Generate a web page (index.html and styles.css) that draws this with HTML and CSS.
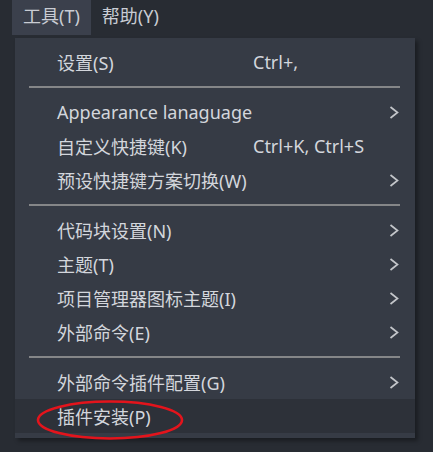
FILE: index.html
```html
<!DOCTYPE html>
<html lang="zh">
<head>
<meta charset="utf-8">
<link rel="stylesheet" href="styles.css">
</head>
<body>
<div class="menubar">
  <div class="top-item active">工具(T)</div>
  <div class="top-item">帮助(Y)</div>
</div>
<div class="panel">
  <div class="item"><span class="label">设置(S)</span><span class="shortcut">Ctrl+,</span></div>
  <div class="sep"></div>
  <div class="item"><span class="label">Appearance lanaguage</span><svg class="arrow" viewBox="0 0 10 14"><polyline points="1.5,1.5 8.5,7 1.5,12.5"/></svg></div>
  <div class="item"><span class="label">自定义快捷键(K)</span><span class="shortcut">Ctrl+K, Ctrl+S</span></div>
  <div class="item"><span class="label">预设快捷键方案切换(W)</span><svg class="arrow" viewBox="0 0 10 14"><polyline points="1.5,1.5 8.5,7 1.5,12.5"/></svg></div>
  <div class="sep"></div>
  <div class="item"><span class="label">代码块设置(N)</span><svg class="arrow" viewBox="0 0 10 14"><polyline points="1.5,1.5 8.5,7 1.5,12.5"/></svg></div>
  <div class="item"><span class="label">主题(T)</span><svg class="arrow" viewBox="0 0 10 14"><polyline points="1.5,1.5 8.5,7 1.5,12.5"/></svg></div>
  <div class="item"><span class="label">项目管理器图标主题(I)</span><svg class="arrow" viewBox="0 0 10 14"><polyline points="1.5,1.5 8.5,7 1.5,12.5"/></svg></div>
  <div class="item"><span class="label">外部命令(E)</span><svg class="arrow" viewBox="0 0 10 14"><polyline points="1.5,1.5 8.5,7 1.5,12.5"/></svg></div>
  <div class="sep"></div>
  <div class="item"><span class="label">外部命令插件配置(G)</span><svg class="arrow" viewBox="0 0 10 14"><polyline points="1.5,1.5 8.5,7 1.5,12.5"/></svg></div>
  <div class="item hover"><span class="label">插件安装(P)</span></div>
</div>
<svg class="circle" viewBox="0 0 150 44"><ellipse cx="74" cy="21" rx="72" ry="18.5"/></svg>
</body>
</html>
```

FILE: styles.css
```css
html, body {
  margin: 0;
  padding: 0;
}
body {
  width: 433px;
  height: 452px;
  overflow: hidden;
  background: #282c33;
  font-family: "Noto Sans", "Noto Sans CJK SC", sans-serif;
  color: #d3d6dc;
  position: relative;
}
.menubar {
  display: flex;
  height: 35px;
  padding-left: 12px;
}
.top-item {
  padding: 0 11px;
  line-height: 33px;
  font-size: 18px;
  color: #c9ccd3;
}
.top-item.active {
  background: #3b404c;
}
.panel {
  margin: 3px 0 0 15px;
  width: 400px;
  padding: 7px 0 5px;
  background: #363b45;
  box-shadow: 3px 3px 4px rgba(0, 0, 0, 0.35);
}
.item {
  height: 34px;
  display: flex;
  align-items: center;
  padding: 0 16px 0 42px;
  font-size: 18px;
}
.item.hover {
  background: #2d3139;
}
.label {
  width: 196px;
  white-space: nowrap;
}
.shortcut {
  white-space: nowrap;
}
.arrow {
  width: 10px;
  height: 15px;
  margin-left: auto;
  fill: none;
  stroke: #c4c6ca;
  stroke-width: 1.7;
}
.sep {
  height: 2px;
  margin: 7px 15px 7px 14px;
  background: #858688;
}
.circle {
  position: absolute;
  left: 36px;
  top: 399px;
  width: 150px;
  height: 44px;
  fill: none;
  stroke: #e3141c;
  stroke-width: 2.6;
}
```
